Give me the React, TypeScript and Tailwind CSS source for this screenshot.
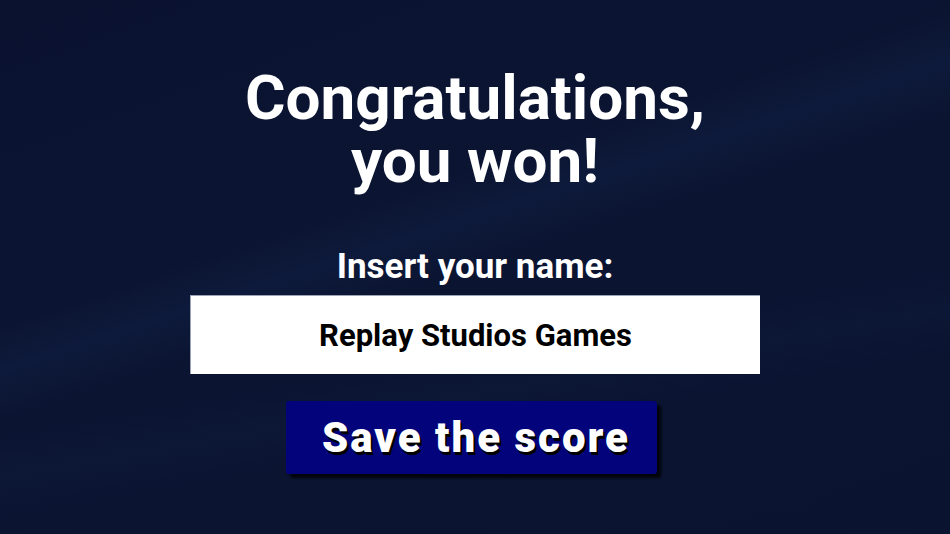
import { useState } from "react";

export default function App() {
  const [name, setName] = useState("Replay Studios Games");

  return (
    <div className="relative flex h-[534px] w-[950px] flex-col items-center overflow-hidden bg-[#0a132c] font-['Roboto',sans-serif]">
      {/* faint light streaks */}
      <div className="pointer-events-none absolute inset-0 bg-[linear-gradient(160deg,#0a1230_0%,#0b1532_45%,#0a1330_100%)]" />
      <div className="pointer-events-none absolute inset-0 bg-[linear-gradient(162deg,transparent_38%,rgba(40,70,140,0.10)_44%,transparent_50%)]" />
      <div className="pointer-events-none absolute inset-0 bg-[linear-gradient(170deg,transparent_62%,rgba(40,70,140,0.06)_68%,transparent_74%)]" />

      <div className="relative flex flex-col items-center">
        <h1 className="mt-[66px] text-center text-[62px] font-bold leading-[63px] text-white">
          Congratulations,
          <br />
          you won!
        </h1>

        <label
          htmlFor="player-name"
          className="mt-[54px] text-[35px] font-bold leading-[41px] text-white"
        >
          Insert your name:
        </label>

        <input
          id="player-name"
          value={name}
          onChange={(e) => setName(e.target.value)}
          className="mt-[8px] h-[79px] w-[570px] border-l border-t border-[#9ca3b4] bg-white text-center text-[31px] font-bold text-black outline-none"
        />

        <button
          type="button"
          className="mr-[7px] mt-[27px] h-[73px] w-[371px] rounded-[3px] bg-[#03037c] pl-[9px] text-[42px] font-black tracking-[2px] text-white shadow-[4px_4px_3px_rgba(0,0,0,0.8)] [text-shadow:2px_3px_0_#000]"
        >
          Save the score
        </button>
      </div>
    </div>
  );
}
